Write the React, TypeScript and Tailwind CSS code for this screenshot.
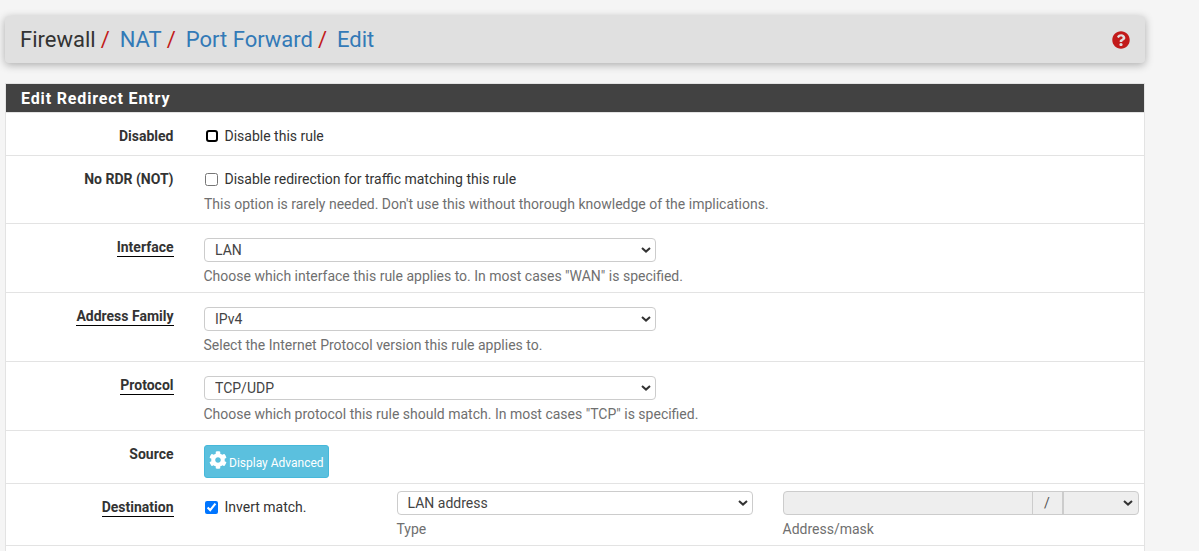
import { ReactNode } from 'react';
import { FaCog, FaQuestionCircle } from 'react-icons/fa';

function Chevron({ top = 'top-[9px]' }: { top?: string }) {
  return (
    <svg
      viewBox="0 0 10 6"
      className={`pointer-events-none absolute right-[5px] ${top} w-[10px] h-[6px]`}
      fill="none"
      stroke="#333"
      strokeWidth="2"
    >
      <path d="M1 1l4 3.6L9 1" />
    </svg>
  );
}

function Select({ value, className }: { value: string; className: string }) {
  return (
    <div className={`relative ${className}`}>
      <select
        defaultValue={value}
        className="block w-full h-[24px] appearance-none bg-white border border-[#ccc] rounded-[4px] pl-[10px] text-[14px] leading-[20px] text-[#444] outline-none"
      >
        <option>{value}</option>
      </select>
      <Chevron />
    </div>
  );
}

function Row({
  label,
  underline,
  height,
  children,
}: {
  label: string;
  underline?: boolean;
  height: string;
  children: ReactNode;
}) {
  return (
    <div className={`flex border-b border-[#e3e3e3] ${height}`}>
      <div className="w-[167.5px] shrink-0 text-right pt-[14px] text-[14px] leading-[19px] font-bold text-[#333]">
        <span className={underline ? 'border-b border-black pb-[1px]' : ''}>{label}</span>
      </div>
      <div className="flex-1 min-w-0 pl-[30.5px]">{children}</div>
    </div>
  );
}

function SelectRow({ label, value, help }: { label: string; value: string; help: string }) {
  return (
    <Row label={label} underline height="h-[69px]">
      <Select value={value} className="w-[452px] mt-[14px]" />
      <p className="mt-[4px] -ml-[0.5px] text-[14px] leading-[20px] text-[#6f6f6f]">{help}</p>
    </Row>
  );
}

export default function App() {
  return (
    <div className="h-[551px] overflow-hidden bg-[#f5f5f5] font-['Roboto',sans-serif] pl-[5px] pr-[54px] pt-[16px]">
      <div className="h-[47px] rounded-[4px] bg-[#e0e0e0] shadow-[0_2px_8px_rgba(0,0,0,0.3)] flex items-center justify-between pl-[15px] pr-[15px]">
        <h1 className="text-[22px] leading-[26px] text-[#333]">
          Firewall<Sep />
          <a className="text-[#337ab7]">NAT</a><Sep />
          <a className="text-[#337ab7]">Port Forward</a><Sep />
          <a className="text-[#337ab7]">Edit</a>
        </h1>
        <FaQuestionCircle className="mt-[1px] text-[#c21a1a]" size={18} />
      </div>

      <div className="mt-[20px] bg-white border-x border-t border-[#e3e3e3]">
        <div className="h-[28px] bg-[#424242] text-white text-[16px] font-bold tracking-[0.85px] leading-[29px] pl-[15px]">
          Edit Redirect Entry
        </div>
        <div className="border-t border-[#e3e3e3]">
          <Row label="Disabled" height="h-[43px]">
            <label className="flex items-center mt-[14px] text-[14px] leading-[18px] text-[#333] ml-[0.5px]">
              <input type="checkbox" className="ml-[1px] mr-[7px] w-[12px] h-[12px] appearance-none bg-white border-2 border-black rounded-[3px]" />
              Disable this rule
            </label>
          </Row>
          <Row label="No RDR (NOT)" height="h-[68px]">
            <label className="flex items-center gap-[7px] mt-[14px] text-[14px] leading-[18px] text-[#333] ml-[0.5px]">
              <input type="checkbox" className="w-[13px] h-[13px]" />
              Disable redirection for traffic matching this rule
            </label>
            <p className="mt-[6px] text-[14px] leading-[20px] text-[#6f6f6f]">
              This option is rarely needed. Don't use this without thorough knowledge of the implications.
            </p>
          </Row>
          <SelectRow label="Interface" value="LAN" help={'Choose which interface this rule applies to. In most cases "WAN" is specified.'} />
          <SelectRow label="Address Family" value="IPv4" help="Select the Internet Protocol version this rule applies to." />
          <SelectRow label="Protocol" value="TCP/UDP" help={'Choose which protocol this rule should match. In most cases "TCP" is specified.'} />
          <Row label="Source" height="h-[53px]">
            <button className="mt-[14px] h-[33px] w-[125px] bg-[#5bc0de] border border-[#46b8da] rounded-[3px] text-white text-[12px] flex items-center pl-[4px] gap-[2px]">
              <FaCog size={18} className="mb-[3px]" />
              <span className="mt-[3px]">Display Advanced</span>
            </button>
          </Row>
          <Row label="Destination" underline height="h-[62px]">
            <div className="flex">
              <label className="w-[192px] shrink-0 flex items-start gap-[7px] mt-[14px] text-[14px] leading-[18px] text-[#333] ml-[0.5px]">
                <input type="checkbox" defaultChecked className="w-[13px] h-[13px] mt-[3px] accent-[#0075ff]" />
                Invert match.
              </label>
              <div className="w-[356px] shrink-0 mt-[7px]">
                <Select value="LAN address" className="w-full" />
                <p className="mt-[4px] text-[14px] leading-[20px] text-[#6f6f6f]">Type</p>
              </div>
              <div className="w-[356px] shrink-0 ml-[30px] mt-[7px]">
                <div className="flex h-[24px] bg-[#eee] border border-[#ccc] rounded-[4px] text-[14px] text-[#555]">
                  <div className="w-[249px] border-r border-[#ccc]" />
                  <div className="w-[31px] text-center leading-[22px] border-r-2 border-[#ccc]">/</div>
                  <div className="relative flex-1">
                    <Chevron top="top-[8px]" />
                  </div>
                </div>
                <p className="mt-[4px] text-[14px] leading-[20px] text-[#6f6f6f]">Address/mask</p>
              </div>
            </div>
          </Row>
          <div className="h-[10px]" />
        </div>
      </div>
    </div>
  );
}

function Sep() {
  return <span className="text-[#c21a1a] ml-[5px] mr-[10px]">/</span>;
}
